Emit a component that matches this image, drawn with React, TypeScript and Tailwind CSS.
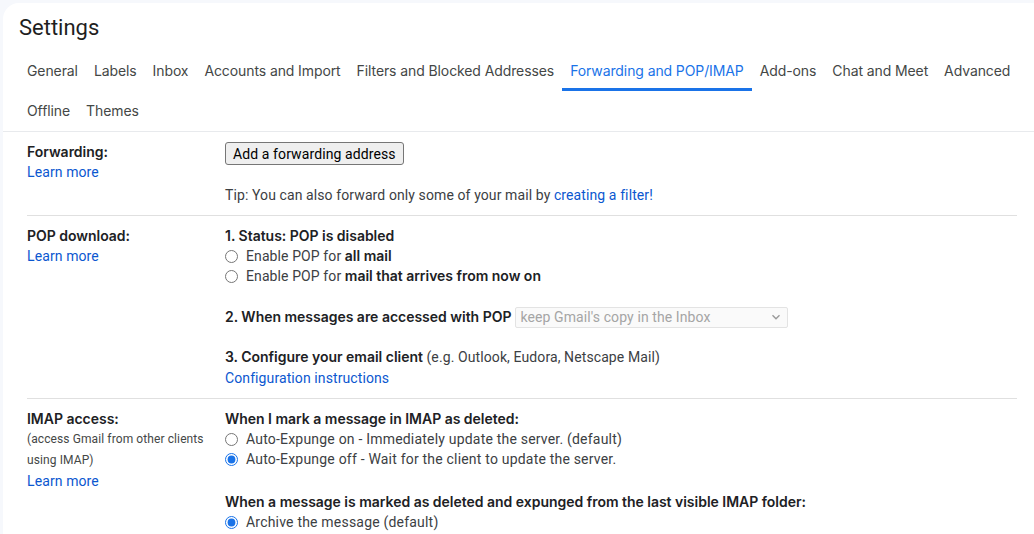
import React from "react";

const font = { fontFamily: "Roboto, 'Liberation Sans', Arial, sans-serif" };
const inter = "font-['Inter',Roboto,sans-serif] tracking-[-0.1px]";

function Radio({ checked, name }: { checked?: boolean; name: string }) {
  return (
    <input
      type="radio"
      name={name}
      defaultChecked={checked}
      className="m-0 w-[13px] h-[13px] shrink-0 accent-[#1a73e8]"
    />
  );
}

function RadioLine({ checked, name, children }: { checked?: boolean; name: string; children: React.ReactNode }) {
  return (
    <div className="flex items-center h-5 gap-2">
      <Radio checked={checked} name={name} />
      <span>{children}</span>
    </div>
  );
}

const tabs1 = [
  "General",
  "Labels",
  "Inbox",
  "Accounts and Import",
  "Filters and Blocked Addresses",
  "Forwarding and POP/IMAP",
  "Add-ons",
  "Chat and Meet",
  "Advanced",
];
const tabs2 = ["Offline", "Themes"];

function Tab({ label, active }: { label: string; active?: boolean }) {
  return (
    <div
      className={
        "h-10 px-2 flex items-center border-t-[1px] border-b-[3px] border-t-transparent whitespace-nowrap " +
        (active ? "border-b-[#1a73e8] text-[#1a73e8]" : "border-b-transparent text-[#444746]")
      }
    >
      {label}
    </div>
  );
}

function B({ children }: { children: React.ReactNode }) {
  return (
    <span className="font-['Inter',Roboto,sans-serif] font-semibold tracking-[-0.02px] text-[#202124]">{children}</span>
  );
}

export default function App() {
  return (
    <div className="min-h-screen bg-[#f6f8fc] pt-[3px] pl-[3px]" style={font}>
      <div className="bg-white rounded-tl-2xl h-[531px] overflow-hidden">
        <div className="h-12 pl-4 flex items-center text-[22px] text-[#1f1f1f]">Settings</div>
        <div className={"border-b border-[#e8eaed] pl-4 text-[14px] " + inter}>
          <div className="flex">
            {tabs1.map((t) => (
              <Tab key={t} label={t} active={t === "Forwarding and POP/IMAP"} />
            ))}
          </div>
          <div className="flex">
            {tabs2.map((t) => (
              <Tab key={t} label={t} />
            ))}
          </div>
        </div>

        <div className="pl-6 pr-[17px] text-[14px] leading-5 text-[#202124] tracking-[0.1px]">
          {/* Forwarding */}
          <div className="grid grid-cols-[198px_1fr] border-b border-[#e0e0e0]">
            <div className="pt-[10px]">
              <div>
                <B>Forwarding:</B>
              </div>
              <a className="text-[#0b57d0]">Learn more</a>
            </div>
            <div className="pt-[10px] pb-[10px]">
              <button className="h-[23px] px-[7px] bg-[#efefef] border border-[#767676] rounded-[3px] text-[14px] text-black leading-none tracking-[0.1px]">
                Add a forwarding address
              </button>
              <div className="mt-5 text-[#3c4043]">
                Tip: You can also forward only some of your mail by{" "}
                <a className="text-[#0b57d0]">creating a filter!</a>
              </div>
            </div>
          </div>

          {/* POP */}
          <div className="grid grid-cols-[198px_1fr] border-b border-[#e0e0e0]">
            <div className="pt-[10px]">
              <div>
                <B>POP download:</B>
              </div>
              <a className="text-[#0b57d0]">Learn more</a>
            </div>
            <div className="pt-[10px] pb-[10px]">
              <div>
                <B>1. Status: POP is disabled</B>
              </div>
              <div className="text-[#3c4043]">
                <RadioLine name="pop">
                  Enable POP for <B>all mail</B>
                </RadioLine>
                <RadioLine name="pop">
                  Enable POP for <B>mail that arrives from now on</B>
                </RadioLine>
              </div>
              <div className="mt-[21px] h-5 flex items-center">
                <B>2. When messages are accessed with POP</B>
                <div className="ml-[4px] w-[273px] h-[21px] border border-[#e3e3e3] bg-[#fafafa] rounded-[2px] flex items-center justify-between pl-[4px] pr-[6px] text-[#a5a5a5]">
                  <span>keep Gmail's copy in the Inbox</span>
                  <svg width="10" height="10" viewBox="0 0 10 10" fill="none">
                    <path d="M1.5 3.2 L5 6.7 L8.5 3.2" stroke="#9a9a9a" strokeWidth="1.4" />
                  </svg>
                </div>
              </div>
              <div className="mt-5 text-[#3c4043]">
                <B>3. Configure your email client</B> (e.g. Outlook, Eudora, Netscape Mail)
              </div>
              <div className="mt-[1px]">
                <a className="text-[#0b57d0]">Configuration instructions</a>
              </div>
            </div>
          </div>

          {/* IMAP */}
          <div className="grid grid-cols-[198px_1fr]">
            <div className="pt-[10px]">
              <div>
                <B>IMAP access:</B>
              </div>
              <div className="text-[12px] leading-[21px] text-[#444746]">
                (access Gmail from other clients
                <br />
                using IMAP)
              </div>
              <a className="text-[#0b57d0]">Learn more</a>
            </div>
            <div className="pt-[10px]">
              <div>
                <B>When I mark a message in IMAP as deleted:</B>
              </div>
              <div className="text-[#3c4043] tracking-[0.2px]">
                <RadioLine name="exp">Auto-Expunge on - Immediately update the server. (default)</RadioLine>
                <RadioLine name="exp" checked>
                  Auto-Expunge off - Wait for the client to update the server.
                </RadioLine>
              </div>
              <div className="mt-[23px]">
                <B>When a message is marked as deleted and expunged from the last visible IMAP folder:</B>
              </div>
              <div className="text-[#3c4043] tracking-[0.2px]">
                <RadioLine name="arch" checked>
                  Archive the message (default)
                </RadioLine>
              </div>
            </div>
          </div>
        </div>
      </div>
    </div>
  );
}
